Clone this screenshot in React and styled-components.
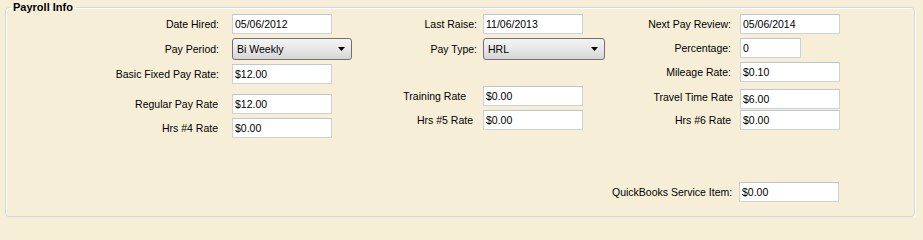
import React from "react";
import styled, { createGlobalStyle } from "styled-components";

const Global = createGlobalStyle`
  html, body { margin: 0; padding: 0; background: #f7eed8; }
  body { font-family: "Liberation Sans", Arial, sans-serif; color: #000; }
`;

const Frame = styled.fieldset`
  box-sizing: border-box;
  margin: 1px 8px 0 5px;
  padding: 0;
  height: 216px;
  border: 1px solid #d3d9df;
  border-radius: 4px;
  box-shadow: inset 1px 1px 0 #ffffff, 1px 1px 0 #ffffff;
  background: #f7eed8;
`;

const Legend = styled.legend`
  margin-left: 4px;
  padding: 0 3px;
  font: bold 11px/13px "Liberation Sans", Arial, sans-serif;
  color: #000;
`;

const Columns = styled.div`
  display: flex;
`;

const Column = styled.div`
  width: ${(p) => p.$width}px;
  display: flex;
  flex-direction: column;
`;

const Row = styled.div`
  display: flex;
  align-items: center;
  margin-top: ${(p) => p.$top || 0}px;
  height: ${(p) => p.$h || 20}px;
`;

const Label = styled.div`
  box-sizing: border-box;
  width: ${(p) => p.$width}px;
  padding-right: ${(p) => p.$pad || 0}px;
  margin-right: ${(p) => p.$gap}px;
  margin-bottom: ${(p) => p.$lift || 0}px;
  text-align: right;
  font-size: 10.5px;
  white-space: nowrap;
  color: #000;
`;

const TextBox = styled.div`
  box-sizing: border-box;
  width: ${(p) => p.$w || 100}px;
  height: 20px;
  background: #fff;
  border: 1px solid #cbd2d8;
  border-top-color: #bfc7ce;
  padding: 0 2px;
  font-size: 10.5px;
  line-height: 18px;
  color: #000;
`;

const Combo = styled.div`
  box-sizing: border-box;
  width: ${(p) => p.$w || 120}px;
  height: 22px;
  border: 1px solid #707070;
  border-radius: 3px;
  background: linear-gradient(#f4f4f4 0%, #e6e6e6 55%, #d5d5d5 100%);
  display: flex;
  align-items: center;
  justify-content: space-between;
  padding: 0 6px 0 4px;
  font-size: 10.5px;
  color: #000;
`;

const Arrow = () => (
  <svg width="7" height="4" viewBox="0 0 7 4">
    <path d="M0 0 H7 L3.5 4 Z" fill="#000" />
  </svg>
);

const Field = ({ label, value, lw, gap, pad, lift, top, w }) => (
  <Row $top={top}>
    <Label $width={lw} $gap={gap} $pad={pad} $lift={lift}>{label}</Label>
    <TextBox $w={w}>{value}</TextBox>
  </Row>
);

const Select = ({ label, value, lw, gap, top, w }) => (
  <Row $top={top} $h={22}>
    <Label $width={lw} $gap={gap}>{label}</Label>
    <Combo $w={w}>
      <span>{value}</span>
      <Arrow />
    </Combo>
  </Row>
);

export default function App() {
  return (
    <>
      <Global />
      <Frame>
        <Legend>Payroll Info</Legend>
        <Columns>
          <Column $width={350}>
            <Field lw={213} gap={13} label="Date Hired:" value="05/06/2012" />
            <Select lw={213} gap={13} top={4} label="Pay Period:" value="Bi Weekly" />
            <Field lw={213} gap={13} top={4} label="Basic Fixed Pay Rate:" value="$12.00" />
            <Field lw={213} gap={13} top={10} pad={1} label="Regular Pay Rate" value="$12.00" />
            <Field lw={213} gap={13} top={4} pad={1} label="Hrs #4 Rate" value="$0.00" />
          </Column>
          <Column $width={256}>
            <Field lw={121} gap={6} label="Last Raise:" value="11/06/2013" />
            <Select lw={121} gap={6} top={4} w={122} label="Pay Type:" value="HRL" />
            <Field lw={121} gap={6} top={26} pad={11} label="Training Rate" value="$0.00" />
            <Field lw={121} gap={6} top={4} pad={4} label="Hrs #5 Rate" value="$0.00" />
          </Column>
          <Column $width={300}>
            <Field lw={119} gap={9} label="Next Pay Review:" value="05/06/2014" />
            <Field lw={119} gap={9} top={4} w={61} label="Percentage:" value="0" />
            <Field lw={119} gap={9} top={4} label="Mileage Rate:" value="$0.10" />
            <Field lw={121} gap={7} top={7} lift={4} label="Travel Time Rate" value="$6.00" />
            <Field lw={119} gap={9} top={1} label="Hrs #6 Rate" value="$0.00" />
            <Field lw={116} gap={11} top={52} label="QuickBooks Service Item:" value="$0.00" />
          </Column>
        </Columns>
      </Frame>
    </>
  );
}
